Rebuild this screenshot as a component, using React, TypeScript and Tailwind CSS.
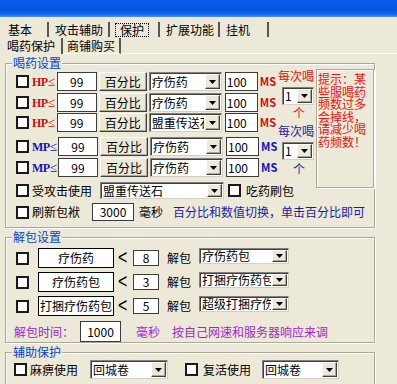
import React from 'react';

// Win32 style "protection" settings pane

function Check() {
  return <span className="block w-[13px] h-[13px] shrink-0 bg-white border-2 border-[#1a1a1a]" />;
}

function DropBtn() {
  return (
    <span className="flex items-center justify-center w-[15px] shrink-0 m-[1px] bg-[#ECE9D8] border border-t-white border-l-white border-r-[#404040] border-b-[#404040] shadow-[inset_-1px_-1px_0_#aca899]">
      <svg width="7" height="4" viewBox="0 0 7 4">
        <path d="M0 0h7L3.5 4z" fill="#000" />
      </svg>
    </span>
  );
}

function Select({ value, className }: { value: string; className: string }) {
  return (
    <div className={`flex shrink-0 bg-white border border-t-[#808080] border-l-[#808080] border-r-[#d4d0c8] border-b-[#d4d0c8] shadow-[inset_1px_1px_0_#404040] ${className}`}>
      <span className="flex-1 min-w-0 pl-[2px] overflow-hidden whitespace-nowrap leading-[16px] self-center">{value}</span>
      <DropBtn />
    </div>
  );
}

function Input({ value, className }: { value: string; className: string }) {
  return (
    <div className={`flex items-center shrink-0 bg-white border border-[#3c3c3c] ${className}`}>
      {value}
    </div>
  );
}

function Btn({ label, className }: { label: string; className: string }) {
  return (
    <div className={`flex items-center justify-center shrink-0 bg-[#ECE9D8] border border-t-white border-l-white border-r-[#404040] border-b-[#404040] shadow-[inset_-1px_-1px_0_#aca899] ${className}`}>
      {label}
    </div>
  );
}

function Group({ title, className, children }: { title: string; className: string; children: React.ReactNode }) {
  return (
    <div className={`relative shrink-0 border border-[#aca899] shadow-[inset_1px_1px_0_#fff,1px_1px_0_#fff] ${className}`}>
      <span className="absolute left-[6px] top-[-8px] px-[1px] bg-[#ECE9D8] text-[#0046d5] leading-[14px]">{title}</span>
      {children}
    </div>
  );
}

const potionRows = [
  { kind: 'HP', item: '疗伤药', mt: 'mt-[8px]' },
  { kind: 'HP', item: '疗伤药', mt: 'mt-[2px]' },
  { kind: 'HP', item: '盟重传送石', mt: 'mt-[1px]' },
  { kind: 'MP', item: '疗伤药', mt: 'mt-[5px]' },
  { kind: 'MP', item: '疗伤药', mt: 'mt-[2px]' },
];

const unpackRows = [
  { name: '疗伤药', count: '8', bag: '疗伤药包', mt: 'mt-[10px]' },
  { name: '疗伤药包', count: '3', bag: '打捆疗伤药包', mt: 'mt-[4px]' },
  { name: '打捆疗伤药包', count: '5', bag: '超级打捆疗伤药包', mt: 'mt-[4px]' },
];

const tabs = [
  { label: '基本', w: 'w-[46px] ml-[3px]' },
  { label: '攻击辅助', w: 'w-[60px] ml-[1px]' },
  { label: '保护', w: 'w-[49px] ml-[1px]', active: true },
  { label: '扩展功能', w: 'w-[59px] ml-[1px]' },
  { label: '挂机', w: 'w-[48px] ml-[1px]' },
];

export default function App() {
  return (
    <div className="w-[397px] h-[384px] overflow-hidden bg-[#ECE9D8] text-[12px] text-black font-['Noto_Sans_CJK_SC',sans-serif] flex flex-col">
      {/* title bar */}
      <div className="h-[17px] shrink-0 bg-[linear-gradient(180deg,#0a5de8_0%,#0654e0_65%,#1c6cef_88%,#5295f6_100%)]" />

      {/* main tabs */}
      <div className="flex items-end h-[20px] shrink-0">
        {tabs.map((t) => (
          <div key={t.label} className={`flex items-center h-[15px] pl-[4px] border-r-2 border-r-[#5a584e] ${t.w}`}>
            {t.active ? (
              <span className="px-[4px] h-[14px] leading-[12px] border border-dotted border-black">{t.label}</span>
            ) : (
              <span className="pl-[1px] leading-[14px]">{t.label}</span>
            )}
          </div>
        ))}
      </div>

      {/* sub tabs */}
      <div className="flex h-[17px] shrink-0">
        <div className="flex items-center w-[60px] ml-[3px] pl-[4px] border-r-2 border-r-[#5a584e] mt-[1px]">喝药保护</div>
        <div className="flex items-center w-[58px] pl-[4px] border-r-2 border-r-[#5a584e] border-b border-b-white mt-[1px]">商铺购买</div>
        <div className="flex-1 border-b border-b-white" />
      </div>

      {/* 喝药设置 */}
      <Group title="喝药设置" className="ml-[5px] mt-[9px] w-[370px] h-[165px]">
        <div className="flex items-start">
          <div className="w-[260px] ml-[10px] shrink-0">
            {potionRows.map((r, i) => (
              <div key={i} className={`flex items-center h-[19px] ${r.mt}`}>
                <Check />
                <span className={`ml-[3px] w-[24px] whitespace-nowrap text-[12px] font-bold font-['Liberation_Serif',serif] tracking-[-0.5px] ${r.kind === 'HP' ? 'text-[#cc1010]' : 'text-[#1010c0]'}`}>
                  {r.kind}<span className="text-[13px] font-normal">≤</span>
                </span>
                <Input value="99" className="ml-[2px] w-[40px] h-[19px] justify-center" />
                <Btn label="百分比" className="ml-[2px] w-[48px] h-[19px]" />
                <Select value={r.item} className="ml-[2px] w-[73px] h-[19px]" />
                <Input value="100" className="ml-[3px] w-[33px] h-[19px] pl-[1px]" />
                <span className={`ml-[2px] text-[11px] font-bold ${r.kind === 'HP' ? 'text-[#cc1010]' : 'text-[#1010c0]'}`}>MS</span>
              </div>
            ))}
            <div className="flex items-center h-[17px] mt-[5px] whitespace-nowrap">
              <Check />
              <span className="ml-[3px] w-[60px]">受攻击使用</span>
              <Select value="盟重传送石" className="ml-[8px] w-[124px] h-[17px]" />
              <span className="ml-[4px]"><Check /></span>
              <span className="ml-[5px]">吃药刷包</span>
            </div>
          </div>

          <div className="flex flex-col w-[36px] ml-[2px] shrink-0 whitespace-nowrap">
            <span className="mt-[6px] leading-[12px] text-[#e01010]">每次喝</span>
            <Select value="1" className="mt-[5px] ml-[4px] w-[32px] h-[18px]" />
            <span className="mt-[2px] leading-[12px] text-center pl-[6px] text-[#e01010]">个</span>
            <span className="mt-[6px] leading-[12px] text-[#1a1aa8]">每次喝</span>
            <Select value="1" className="mt-[5px] ml-[4px] w-[32px] h-[18px]" />
            <span className="mt-[3px] leading-[12px] text-center pl-[6px] text-[#1a1aa8]">个</span>
          </div>

          <div className="mt-[5px] ml-[2px] w-[58px] h-[119px] shrink-0 border border-[#aca899] shadow-[inset_1px_1px_0_#fff,1px_1px_0_#fff] pl-[1px] pt-[3px] text-[#ee1010] leading-[12.5px] whitespace-nowrap">
            提示：某<br />些服喝药<br />频数过多<br />会掉线，<br />请减少喝<br />药频数！
          </div>
        </div>

        <div className="flex items-center h-[18px] mt-[4px] ml-[10px] whitespace-nowrap">
          <Check />
          <span className="ml-[3px]">刷新包袱</span>
          <Input value="3000" className="ml-[12px] w-[42px] h-[18px] justify-center" />
          <span className="ml-[5px]">毫秒</span>
          <span className="ml-[10px] text-[#1b1ba8]">百分比和数值切换，单击百分比即可</span>
        </div>
      </Group>

      {/* 解包设置 */}
      <Group title="解包设置" className="ml-[5px] mt-[9px] w-[370px] h-[106px]">
        {unpackRows.map((r, i) => (
          <div key={i} className={`flex items-center h-[20px] whitespace-nowrap ${r.mt}`}>
            <span className="ml-[10px]"><Check /></span>
            <div className="ml-[9px] w-[76px] h-[20px] flex items-center justify-center bg-white border border-black">{r.name}</div>
            <span className="ml-[4px] w-[8px] text-[16px] font-['Liberation_Sans',sans-serif] leading-none scale-y-125">&lt;</span>
            <Input value={r.count} className="ml-[7px] w-[26px] h-[16px] justify-center" />
            <span className="ml-[8px] w-[24px]">解包</span>
            <Select value={r.bag} className="ml-[8px] w-[90px] h-[16px] self-start" />
          </div>
        ))}
        <div className="flex items-center h-[21px] mt-[5px] whitespace-nowrap text-[#9c27d0]">
          <span className="ml-[8px]">解包时间：</span>
          <Input value="1000" className="ml-[6px] w-[41px] h-[21px] justify-center text-black" />
          <span className="ml-[15px]">毫秒</span>
          <span className="ml-[12px]">按自己网速和服务器响应来调</span>
        </div>
      </Group>

      {/* 辅助保护 */}
      <Group title="辅助保护" className="ml-[5px] mt-[9px] w-[370px] h-[40px]">
        <div className="flex items-center h-[19px] mt-[7px] whitespace-nowrap">
          <span className="ml-[8px]"><Check /></span>
          <span className="ml-[3px]">麻痹使用</span>
          <Select value="回城卷" className="ml-[12px] w-[78px] h-[19px]" />
          <span className="ml-[17px]"><Check /></span>
          <span className="ml-[5px]">复活使用</span>
          <Select value="回城卷" className="ml-[11px] w-[77px] h-[19px]" />
        </div>
      </Group>
    </div>
  );
}
